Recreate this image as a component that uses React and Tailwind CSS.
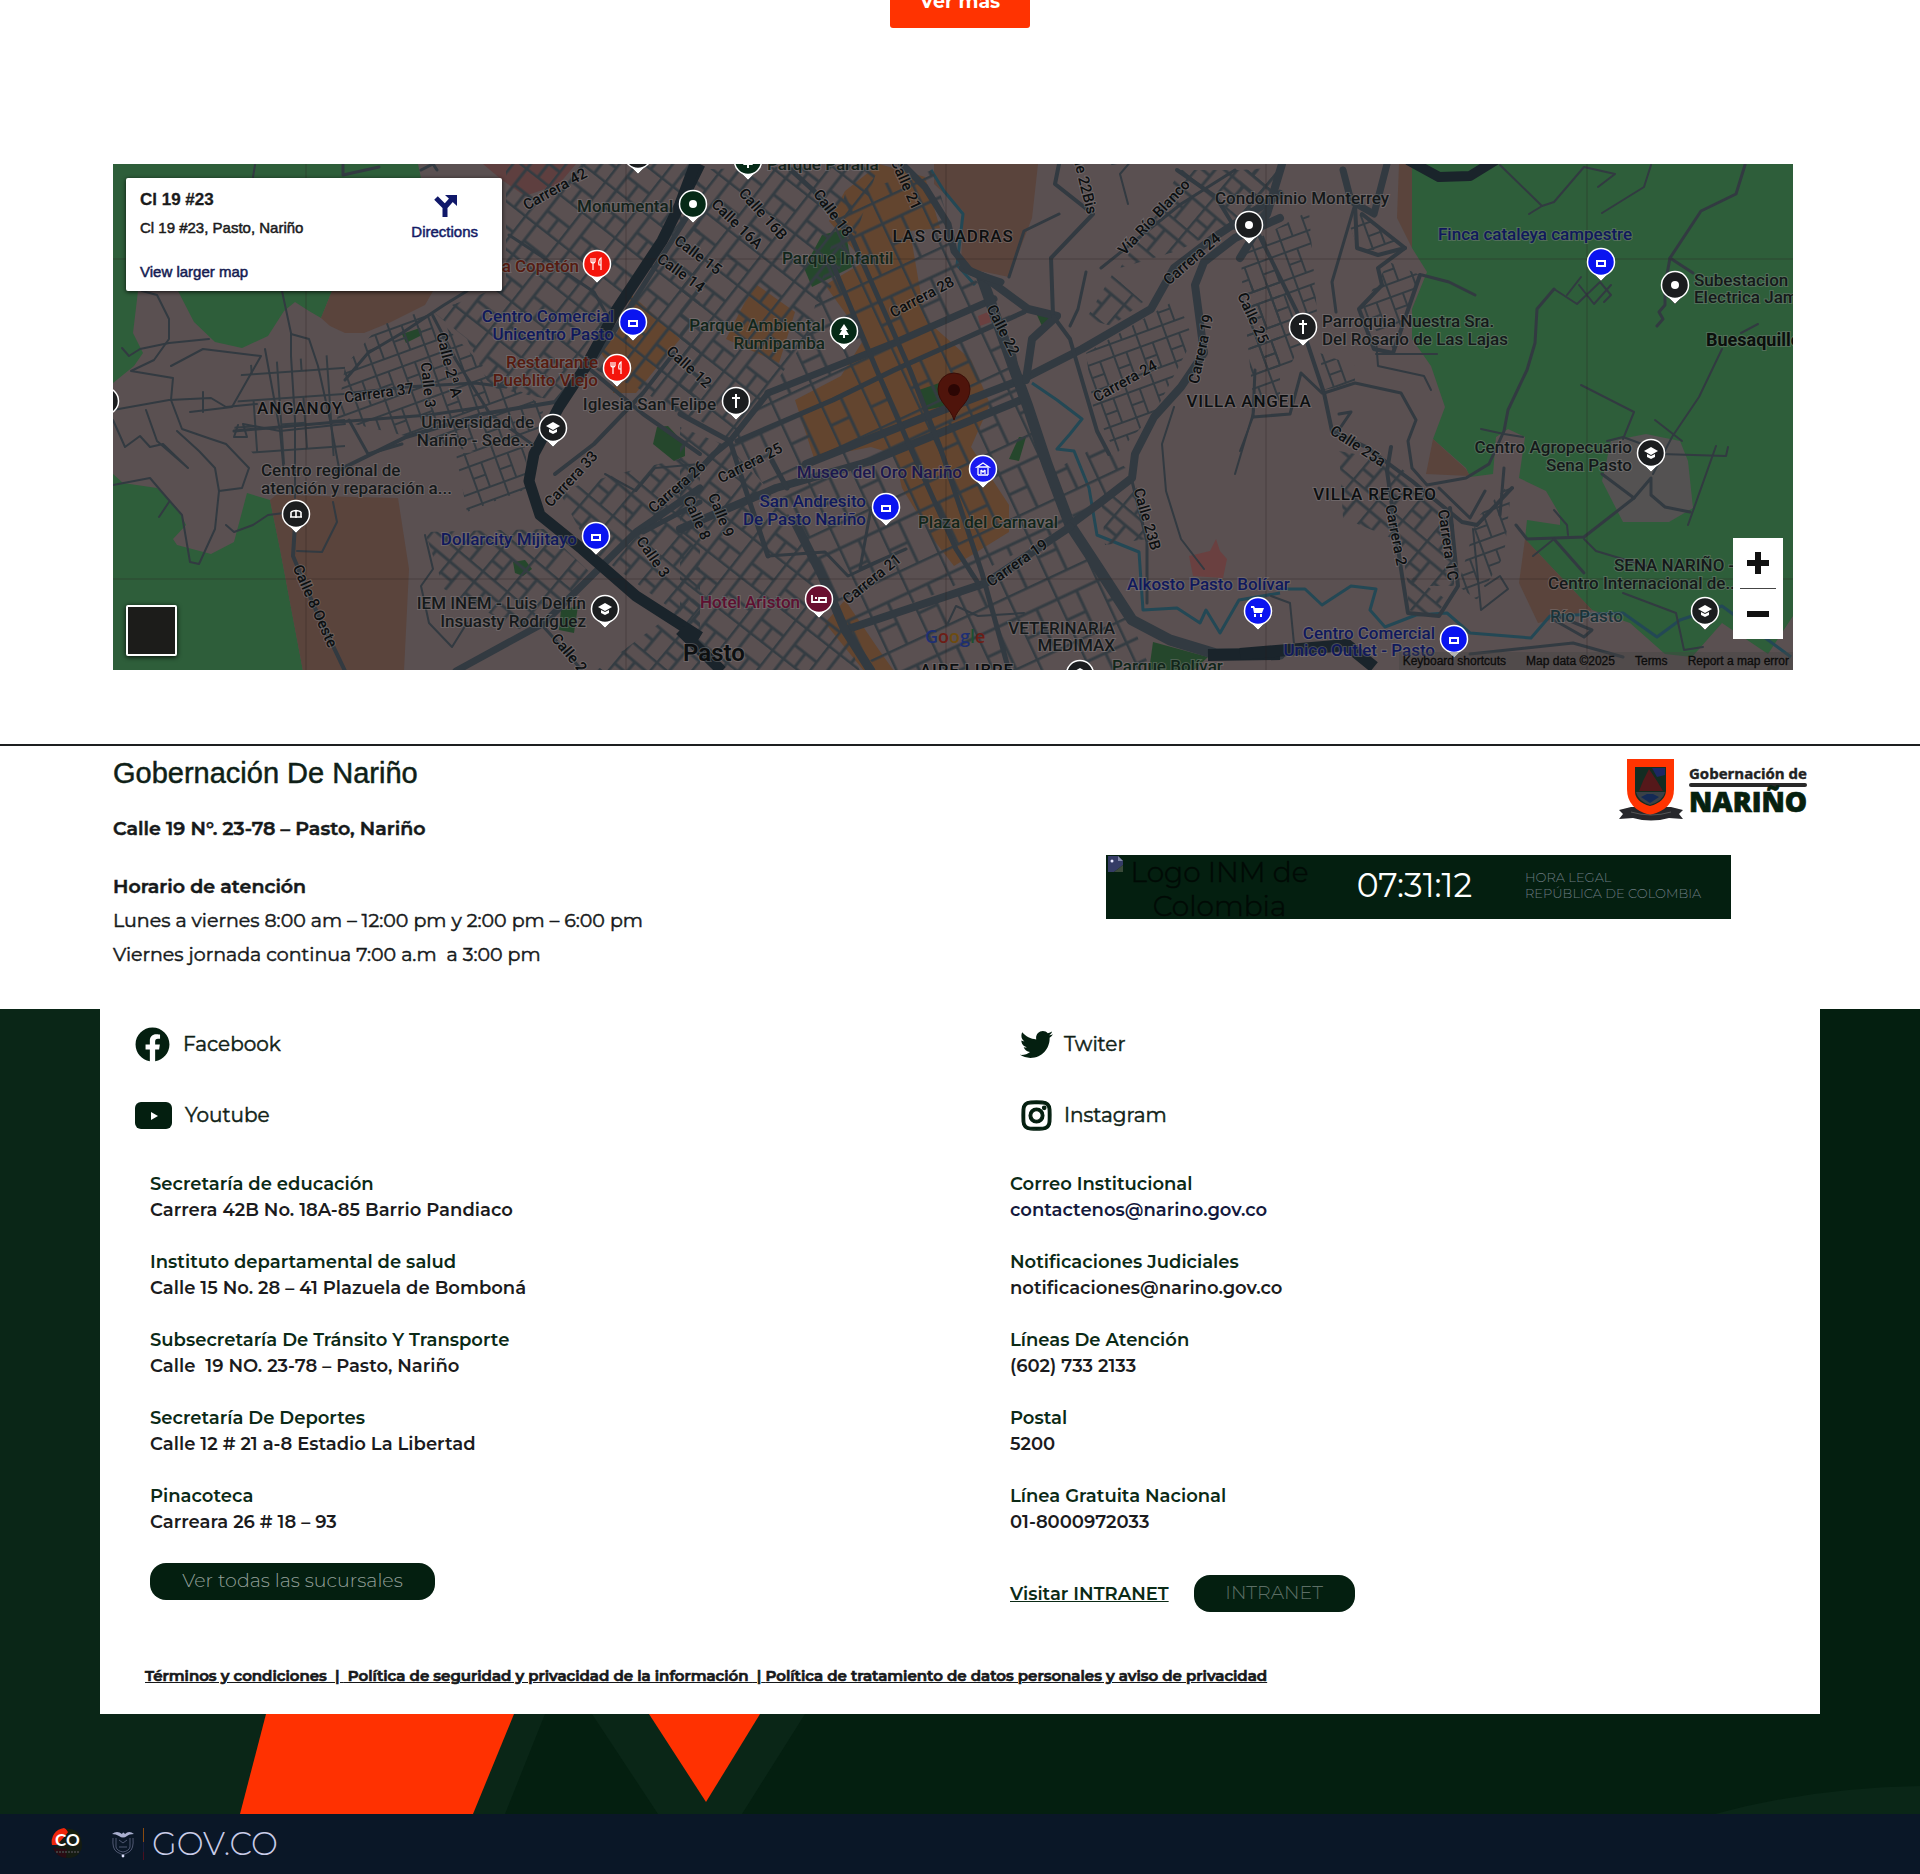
import React from "react";
import { FaFacebook, FaTwitter, FaInstagram } from "react-icons/fa";

/* ---------- map geometry ---------- */

const SHEETS = { west: 100, center: 680, east: 1240 };
const project = (sheet, pts) =>
  pts
    .split(" ")
    .map((p) => {
      const [x, y] = p.split(",").map(Number);
      return `${Math.round(SHEETS[sheet] + x * 0.38265)},${Math.round(150 + y * 0.338)}`;
    })
    .join(" ");

const GREEN = "#2e5e3a";
const BROWN = "#5a443c";
const PARK = "#25472c";
const SHOP = "#63452f";
const ROSE = "#6a4040";

const AREAS = [
  ["west", GREEN, "34,40 620,40 830,40 840,83 605,417 578,497 545,475 510,450 480,475 440,550 370,585 300,568 245,510 205,417 100,417 85,540 112,600 90,640 34,690"],
  ["west", BROWN, "605,417 870,417 850,460 760,510 690,540 640,540 600,520 578,497"],
  ["west", "#5e3f3f", "1000,40 1245,40 1200,100 1110,135 1050,90"],
  ["west", GREEN, "34,960 60,985 150,1000 200,1060 225,1110 190,1150 200,1170 290,1195 350,1160 385,1015 445,1035 470,1180 530,1540 34,1540"],
  ["west", BROWN, "445,1035 460,1020 780,1030 808,1240 795,1540 530,1540 470,1180"],
  ["west", PARK, "1455,820 1485,818 1530,870 1528,905 1500,920 1445,870"],
  ["west", PARK, "1080,1220 1110,1212 1130,1240 1105,1260 1085,1250"],
  ["west", PARK, "790,545 835,528 842,548 800,570"],
  ["west", SHOP, "1390,430 1515,560 1400,720 1340,720 1345,660 1310,600 1350,540"],
  ["west", PARK, "1205,1360 1250,1350 1240,1430 1200,1420"],
  ["center", BROWN, "665,40 935,40 920,200 860,375 735,345 740,180 665,100"],
  ["center", SHOP, "520,40 640,80 680,230 600,240 640,500 760,620 810,750 760,880 860,1050 860,1130 715,1230 660,1150 580,1000 560,900 500,880 350,910 300,740 420,670 480,560 380,400 480,330 390,210 430,120"],
  ["center", SHOP, "200,400 300,480 260,630 120,560 170,450"],
  ["center", SHOP, "430,1330 520,1480 560,1540 480,1540 380,1400"],
  ["center", PARK, "370,250 430,235 450,345 345,405 325,350"],
  ["center", PARK, "625,710 700,680 720,750 640,770"],
  ["center", PARK, "930,482 975,480 990,500 945,520"],
  ["center", PARK, "885,850 905,850 885,920 860,915"],
  ["center", PARK, "1235,1455 1380,1500 1340,1540 1225,1540"],
  ["center", ROSE, "1330,1200 1385,1185 1400,1150 1410,1185 1430,1210 1420,1265 1340,1260"],
  ["center", ROSE, "780,490 805,480 812,510 785,520"],
  ["east", GREEN, "450,40 450,290 490,360 450,470 450,560 500,640 535,760 505,855 590,940 600,968 660,960 670,850 700,825 745,850 730,970 800,1010 835,1080 835,1110 750,1095 745,1150 920,1360 1020,1400 1110,1490 1180,1500 1260,1400 1380,1490 1445,1380 1445,40"],
  ["east", BROWN, "415,40 450,40 450,290 410,200"],
  ["east", BROWN, "505,855 590,945 600,965 487,960"],
  ["east", BROWN, "745,1150 920,1360 780,1400 730,1280"],
  ["east", "#545252", "970,860 1060,840 1150,860 1170,920 1185,1060 1120,1100 1000,1100 945,980"],
];

const RIVERS = [
  ["center", "655,60 690,120 740,190 725,340 770,400"],
  ["center", "920,690 985,740 1050,795 1020,840 985,885 1030,890 1070,1000 1090,1140 1200,1190 1210,1360 1300,1355 1360,1400 1375,1360 1410,1430 1460,1330 1568,1310"],
  ["east", "100,1300 170,1300 215,1345 290,1290 355,1300 340,1360 380,1410 460,1375 540,1370 600,1430 760,1445 810,1380 1000,1370 1090,1440 1150,1390 1260,1350 1320,1400 1440,1500"],
];

// [sheet, fill pattern, outline]
const BLOCKS = [
  ["west", "grid-steep", "1060,40 1568,40 1568,820 1400,700 1270,640 1180,740 1020,700 960,560 870,480 1060,400"],
  ["west", "grid-mild", "640,640 730,520 860,470 1000,640 1160,760 1140,860 1000,900 620,800"],
  ["west", "grid-upright", "370,640 640,600 640,900 430,940 350,830"],
  ["west", "grid-mild", "930,900 1110,880 1120,1000 960,1070"],
  ["west", "grid-diag", "850,1130 1160,1120 1290,1260 1100,1420 900,1300"],
  ["west", "grid-diag", "1200,1010 1350,960 1568,900 1568,1420 1280,1180"],
  ["west", "grid-diag", "1300,1537 1568,1310 1568,1540"],
  ["center", "grid-steep", "0,60 520,40 460,250 330,560 230,720 130,860 0,760"],
  ["center", "grid-core", "430,130 660,60 740,350 860,480 900,740 960,930 1020,1110 700,1300 430,1420 370,1260 300,1100 130,870 230,720 330,560"],
  ["center", "grid-steep", "0,820 130,880 300,1100 370,1260 470,1540 130,1540 0,1400"],
  ["center", "grid-core", "440,1430 800,1290 1020,1130 1180,1400 1230,1540 520,1540"],
  ["center", "grid-core", "960,960 1100,870 1180,960 1030,1090"],
  ["center", "grid-mild", "1060,600 1300,440 1340,560 1240,780 1140,900 1080,760"],
  ["center", "grid-diag", "1060,500 1130,370 1210,450 1130,520"],
  ["center", "grid-diag", "1310,60 1568,60 1568,150 1300,300 1150,350"],
  ["center", "grid-mild", "1470,400 1568,390 1568,740 1500,760"],
  ["center", "grid-diag", "1100,1030 1190,980 1220,1150 1110,1170"],
  ["east", "grid-mild", "0,260 50,260 180,180 200,480 130,640 40,660 10,500"],
  ["east", "grid-mild", "280,200 320,190 430,290 310,300"],
  ["east", "grid-mild", "390,330 470,370 400,590 310,480"],
  ["east", "grid-mild", "210,600 300,640 300,690 220,710"],
  ["east", "grid-diag", "260,890 400,920 560,1080 560,1290 440,1290 420,1160 270,1090"],
  ["east", "grid-mild", "620,1090 710,980 690,1200 620,1330 570,1290"],
  ["east", "grid-diag", "440,1250 540,1330 510,1380 440,1360"],
  ["east", "grid-diag", "0,60 110,50 80,180 0,240"],
];

// [sheet, width, points]
const ROADS = [
  ["west", 2, "58,585 75,610 105,590 180,570 285,560"],
  ["west", 2, "110,417 150,430 180,500 180,560 140,620 80,655 190,675 185,740 215,825 290,855 330,870 390,940 370,1000 310,1010 300,940 260,890 200,830"],
  ["west", 2, "34,770 180,740 290,735 330,760 410,750"],
  ["west", 2, "34,800 65,880 105,845 130,880 165,870 230,940 150,860 120,770"],
  ["west", 2, "34,990 130,970 160,1010 215,1080 235,1220 260,1225 300,1120 310,1010"],
  ["west", 2, "180,1040 155,1085"],
  ["west", 2, "330,1110 350,1130 400,1110 440,1080 480,1075"],
  ["west", 2, "235,775 345,760 420,610 270,590 185,640"],
  ["west", 2, "475,417 500,540 500,610 510,800 510,1030"],
  ["west", 2, "430,590 470,830 480,960"],
  ["west", 2, "500,545 545,560 570,640 600,800 625,940"],
  ["west", 2, "610,1040 620,1100 580,1190 515,1185"],
  ["west", 2, "270,715 270,775"],
  ["west", 2, "360,815 350,850 385,850 375,810 470,830 640,810"],
  ["west", 3, "350,830 620,805 860,785 1000,760"],
  ["west", 3, "640,680 700,600 790,540 900,460 960,417"],
  ["west", 3, "660,720 800,700 980,690 1060,700"],
  ["west", 4, "510,1110 505,1200 560,1350 640,1540"],
  ["west", 4, "620,950 800,850 1000,780 1190,745 1230,690"],
  ["west", 3, "650,800 700,900 790,870"],
  ["west", 3, "870,490 930,620 1020,780 1140,880"],
  ["west", 3, "1070,250 1160,320 1290,420 1340,520"],
  ["west", 3, "880,60 870,40 840,60"],
  ["west", 2, "405,45 400,80"],
  ["west", 3, "635,45 635,75 730,50"],
  ["west", 2, "850,1140 870,1240 840,1290 860,1400 920,1470 960,1400"],
  ["west", 7, "930,1540 1160,1400 1400,1130 1568,1000"],
  ["west", 3, "1150,1400 1230,1500 1260,1540"],
  ["west", 5, "1190,780 1330,560 1568,140"],
  ["west", 4, "1270,640 1420,780 1568,900"],
  ["west", 5, "1420,1130 1568,1040"],
  ["west", 4, "1190,960 1290,870 1420,720 1500,600"],
  ["west", 2, "1320,960 1400,1010 1450,940 1568,930"],
  ["center", 7, "230,720 560,570 820,440"],
  ["center", 8, "330,930 620,800 890,680 1050,590 1230,470 1290,350 1400,255 1568,130"],
  ["center", 8, "0,1120 250,1000 500,920 890,740"],
  ["center", 11, "790,380 870,640 910,760 960,930 1020,1110 1090,1230 1180,1390 1280,1450 1400,1490 1568,1490"],
  ["center", 8, "740,350 800,380 910,470 985,490 920,560 905,680"],
  ["center", 7, "580,40 640,110 700,220 715,300 760,360 840,390"],
  ["center", 8, "1568,200 1450,260 1370,330 1345,400 1370,600 1310,700 1240,790 1190,900 1180,970 1100,1040 1020,1110"],
  ["center", 8, "1020,1115 800,1280 430,1420"],
  ["center", 9, "300,1100 370,1260 430,1420 500,1540"],
  ["center", 6, "230,720 130,860 90,900 0,1010"],
  ["center", 5, "0,780 130,860 170,1000 230,1200"],
  ["center", 5, "150,860 400,740 560,650 900,480"],
  ["center", 5, "290,60 350,120 450,260 600,650 680,880 790,1250 860,1540"],
  ["center", 5, "400,340 510,640 600,880 720,1180 780,1280"],
  ["center", 5, "280,1000 240,920"],
  ["center", 4, "990,40 980,100 1080,190 970,320 975,490"],
  ["center", 3, "860,375 900,240 990,190"],
  ["center", 4, "975,490 1020,560 1030,600 1090,830 1120,900"],
  ["center", 3, "1060,360 1040,470 1020,520"],
  ["center", 3, "1100,350 1310,160 1450,60"],
  ["center", 4, "1300,60 1400,140 1450,230"],
  ["center", 2, "1290,760 1260,870 1270,1010 1310,1150 1370,1240"],
  ["center", 2, "1500,770 1450,960"],
  ["center", 2, "1130,40 1180,30 1150,70 1170,160"],
  ["center", 2, "700,1400 720,1350 780,1380 900,1370"],
  ["center", 3, "1180,980 1220,1160 1220,1340"],
  ["center", 3, "230,1200 380,1190 440,1260 590,1180 470,1240 500,1060"],
  ["east", 8, "110,40 70,190 0,320"],
  ["east", 7, "270,60 290,150 350,190 385,40"],
  ["east", 4, "50,250 150,480 220,720 240,830"],
  ["east", 3, "300,160 240,390 250,480"],
  ["east", 4, "300,160 305,290 360,310 430,290 320,190"],
  ["east", 4, "430,290 360,350 370,400 310,470 350,590 400,600 470,370"],
  ["east", 3, "40,650 35,790 130,780 160,660 215,720"],
  ["east", 2, "35,790 0,890"],
  ["east", 3, "220,720 300,690 420,720 460,800 440,860 450,940 490,990 590,970 650,930 690,830 700,770 750,650 770,570 775,470 820,410"],
  ["east", 4, "240,830 330,880 450,980 580,1100 620,1110 710,1000"],
  ["east", 4, "395,880 385,950 420,1240 440,1370 520,1380 570,1290 550,1060"],
  ["east", 3, "260,780 290,775 250,840"],
  ["east", 2, "610,1120 630,1360 700,1300 680,1260 640,1290"],
  ["east", 3, "680,1080 690,940"],
  ["east", 2, "680,45 790,165 820,155 900,50 980,70 935,110"],
  ["east", 2, "790,165 755,190"],
  ["east", 2, "1075,45 1055,110 945,185"],
  ["east", 3, "1320,45 1295,130 1205,180 1125,320 1110,400 1110,460 1095,480 1105,500 1090,520"],
  ["east", 3, "1125,320 1185,365"],
  ["east", 2, "820,410 880,455 940,390 970,430 950,450"],
  ["east", 2, "890,375 855,430"],
  ["east", 2, "885,400 925,455 970,400"],
  ["east", 2, "1355,515 1310,540"],
  ["east", 2, "1260,590 1200,730 1130,850 1080,960"],
  ["east", 2, "890,695 1030,775 1000,855"],
  ["east", 2, "630,825 690,840 740,850"],
  ["east", 2, "1085,800 1155,860"],
  ["east", 2, "1100,900 1270,905 1275,880"],
  ["east", 2, "1245,875 1170,1110"],
  ["east", 2, "960,860 1000,850 1050,870"],
  ["east", 3, "945,960 1030,1030 1075,970 1075,1020 1110,1055 1175,1070"],
  ["east", 3, "1030,1030 900,1145 750,1150 720,1110"],
  ["east", 2, "900,1150 930,1185 1060,1230"],
  ["east", 3, "820,1150 900,1250"],
  ["east", 2, "820,1065 855,1110 858,1140"],
  ["east", 2, "820,1150 765,1200"],
  ["east", 3, "475,370 545,390 615,430"],
  ["east", 2, "355,605 515,605"],
  ["east", 2, "355,560 360,640 480,670 500,710"],
  ["east", 3, "520,1000 600,1090 640,1010"],
  ["east", 2, "80,1320 130,1340 145,1490"],
  ["east", 2, "1000,1310 1140,1370 1160,1480 1210,1470"],
  ["east", 3, "830,1380 920,1420 900,1440 820,1390"],
  ["east", 3, "600,1490 870,1460 1000,1500"],
];

const HIGHWAYS = [
  ["west", 11, "1568,40 1470,270 1350,470 1270,640 1200,760 1135,900 1120,980 1150,1080 1260,1180 1400,1320 1568,1440"],
  ["center", 11, "40,40 0,160"],
  ["center", 11, "0,1420 110,1540"],
  ["center", 12, "1380,1495 1568,1490"],
  ["east", 12, "0,1490 280,1465 350,1530"],
  ["east", 10, "440,30 520,80 600,78 670,30"],
];

// [text, x, y, anchor, colour]
const INK = "#15191a";
const BLUE = "#10195c";
const RUST = "#561b10";
const PLACES = [
  ["Monumental", 673, 212, "end", "#14221a"],
  ["La Copetón", 579, 272, "end", RUST],
  ["Centro Comercial", 614, 322, "end", BLUE],
  ["Unicentro Pasto", 614, 340, "end", BLUE],
  ["Restaurante", 598, 368, "end", RUST],
  ["Pueblito Viejo", 598, 386, "end", RUST],
  ["Universidad de", 534, 428, "end", INK],
  ["Nariño - Sede...", 534, 446, "end", INK],
  ["Centro regional de", 261, 476, "start", INK],
  ["atención y reparación a...", 261, 494, "start", INK],
  ["Dollarcity Mijitayo", 577, 545, "end", BLUE],
  ["IEM INEM - Luis Delfín", 586, 609, "end", INK],
  ["Insuasty Rodríguez", 586, 627, "end", INK],
  ["Iglesia San Felipe", 716, 410, "end", INK],
  ["Parque Paraña", 767, 170, "start", "#14221a"],
  ["Parque Infantil", 782, 264, "start", "#12261a"],
  ["Parque Ambiental", 825, 331, "end", "#12261a"],
  ["Rumipamba", 825, 349, "end", "#12261a"],
  ["Museo del Oro Nariño", 962, 478, "end", "#1c184e"],
  ["San Andresito", 866, 507, "end", BLUE],
  ["De Pasto Nariño", 866, 525, "end", BLUE],
  ["Plaza del Carnaval", 918, 528, "start", "#12261a"],
  ["Hotel Ariston", 800, 608, "end", "#5e1030"],
  ["VETERINARIA", 1115, 634, "end", INK],
  ["MEDIMAX", 1115, 651, "end", INK],
  ["Parque Bolívar", 1112, 672, "start", "#12261a"],
  ["Alkosto Pasto Bolívar", 1127, 590, "start", BLUE],
  ["Condominio Monterrey", 1215, 204, "start", INK],
  ["Finca cataleya campestre", 1438, 240, "start", BLUE],
  ["Subestacion", 1694, 286, "start", INK],
  ["Electrica Jamondino", 1694, 303, "start", INK],
  ["Parroquia Nuestra Sra.", 1322, 327, "start", INK],
  ["Del Rosario de Las Lajas", 1322, 345, "start", INK],
  ["Centro Agropecuario", 1632, 453, "end", INK],
  ["Sena Pasto", 1632, 471, "end", INK],
  ["SENA NARIÑO -", 1614, 571, "start", INK],
  ["Centro Internacional de...", 1548, 589, "start", INK],
  ["Río Pasto", 1550, 622, "start", "#1b3338"],
  ["Centro Comercial", 1435, 639, "end", BLUE],
  ["Unico Outlet - Pasto", 1435, 656, "end", BLUE],
];

const DISTRICTS = [
  ["ANGANOY", 300, 414],
  ["LAS CUADRAS", 953, 242],
  ["VILLA ANGELA", 1249, 407],
  ["VILLA RECREO", 1375, 500],
  ["AIRE LIBRE", 967, 676],
];

// [text, cx, cy, angle]
const STREETS = [
  ["Carrera 42", 555, 189, -29],
  ["Carrera 37", 379, 393, -8],
  ["Calle 2ª A", 449, 365, 76],
  ["Calle 3", 428, 385, 84],
  ["Calle 8 Oeste", 315, 606, 66],
  ["Carrera 33", 571, 479, -47],
  ["Calle 3", 653, 557, 55],
  ["Calle 2", 569, 653, 50],
  ["Calle 16A", 737, 224, 44],
  ["Calle 16B", 763, 214, 48],
  ["Calle 15", 698, 255, 37],
  ["Calle 14", 681, 273, 36],
  ["Calle 12", 689, 367, 42],
  ["Calle 18", 833, 213, 53],
  ["Calle 21", 906, 184, 66],
  ["Calle 22Bis", 1083, 177, 76],
  ["Vía Río Blanco", 1154, 217, -47],
  ["Carrera 24", 1192, 259, -41],
  ["Carrera 28", 922, 297, -28],
  ["Calle 22", 1003, 330, 63],
  ["Carrera 24", 1125, 381, -29],
  ["Carrera 19", 1201, 349, -78],
  ["Calle 25", 1253, 318, 65],
  ["Carrera 26", 677, 487, -41],
  ["Carrera 25", 750, 463, -27],
  ["Calle 8", 697, 518, 66],
  ["Calle 9", 721, 515, 68],
  ["Carrera 21", 872, 579, -39],
  ["Carrera 19", 1017, 563, -35],
  ["Calle 23B", 1147, 519, 74],
  ["Calle 25a", 1358, 446, 33],
  ["Carrera 2", 1396, 535, 79],
  ["Carrera 1C", 1448, 545, 82],
];

const BLACK = "#1b1d1f";
const PINS = [
  [693, 204, "#062a17", "dot"],
  [597, 264, "#f4150c", "food"],
  [633, 322, "#0a14f0", "bag"],
  [617, 368, "#f4150c", "food"],
  [553, 428, BLACK, "school"],
  [296, 514, BLACK, "civic"],
  [596, 536, "#0a14f0", "bag"],
  [605, 609, BLACK, "school"],
  [105, 401, BLACK, "none"],
  [638, 155, BLACK, "none"],
  [748, 161, "#062a17", "tree"],
  [844, 331, "#062a17", "tree"],
  [736, 401, BLACK, "cross"],
  [983, 469, "#1a1af0", "museum"],
  [886, 507, "#0a14f0", "bag"],
  [819, 599, "#6a1030", "bed"],
  [1249, 225, BLACK, "dot"],
  [1258, 611, "#0a14f0", "cart"],
  [1080, 674, BLACK, "school"],
  [1601, 262, "#0a14f0", "bag"],
  [1675, 285, BLACK, "dot"],
  [1303, 327, BLACK, "cross"],
  [1651, 453, BLACK, "school"],
  [1705, 611, BLACK, "school"],
  [1454, 639, "#0a14f0", "bag"],
];

const GLYPHS = {
  none: null,
  dot: <circle r="4" fill="#fff" />,
  cross: <path d="M0-7V7M-4-3H4" stroke="#fff" strokeWidth="2" fill="none" />,
  tree: <path d="M0-7 4-1H2L5 4H1V7H-1V4H-5L-2-1H-4Z" fill="#fff" />,
  food: <path d="M-4-6V-2M-2-6V-2M-6-6V-2Q-4 0-2-2M-4-1V6M4 6V-6Q1-4 2 1H4" stroke="#fff" strokeWidth="1.2" fill="none" />,
  bag: <path d="M-4-1H4V4H-4Z" stroke="#fff" strokeWidth="2" fill="none" />,
  school: (
    <g fill="#fff">
      <path d="M0-6 7-2 0 2-7-2Z" />
      <path d="M-4 1 0 3 4 1V4L0 6-4 4Z" />
    </g>
  ),
  civic: <path d="M-5-2V3M5-2V3M0-3V4M-6 3H6M-5-2Q0-5 5-2" stroke="#fff" strokeWidth="1.6" fill="none" />,
  museum: <path d="M-6-2 0-6 6-2ZM-5-1V6M5-1V6M-5 6H5M-2 1V5M2 1V5M-2 1 0 3 2 1" stroke="#fff" strokeWidth="1.3" fill="none" />,
  bed: <path d="M-7-4V4M-7 3H7V0M7 4V-1H0V3M-4-1H-2" stroke="#fff" strokeWidth="1.8" fill="none" />,
  cart: (
    <g fill="#fff">
      <path d="M-7-5H-4L-3-3H6L4 2H-4L-5-3H-7Z" />
      <path d="M-4 3H-2V6H-4ZM2 3H4V6H2Z" />
    </g>
  ),
};

// Blocks of a street grid: long parallel streets with through cross streets and a few half-block lanes.
function GridPattern({ id, angle, w, h, stroke = 2 }) {
  const mid = Math.round(w / 2);
  return (
    <pattern id={id} width={w} height={h * 3} patternUnits="userSpaceOnUse" patternTransform={`rotate(${angle})`}>
      <path
        d={`M0 1H${w}M0 ${h + 1}H${w}M0 ${h * 2 + 1}H${mid}M1 0V${h * 3}M${mid} ${h}V${h * 3}`}
        stroke="#343c42"
        strokeWidth={stroke}
        fill="none"
      />
    </pattern>
  );
}

function CityMap() {
  return (
    <svg
      className="block h-full w-full"
      viewBox="113 164 1680 506"
      preserveAspectRatio="xMidYMid slice"
      role="img"
      aria-label="Mapa de Pasto, Nariño"
      fontFamily="Roboto, sans-serif"
    >
      <defs>
        <GridPattern id="grid-steep" angle={-52} w={38} h={14} stroke={3} />
        <GridPattern id="grid-mild" angle={-20} w={28} h={13} />
        <GridPattern id="grid-upright" angle={-4} w={50} h={26} />
        <GridPattern id="grid-diag" angle={40} w={32} h={14} stroke={3} />
        <GridPattern id="grid-core" angle={-25} w={44} h={23} stroke={3} />
      </defs>
      <rect x="113" y="164" width="1680" height="506" fill="#5a5051" />
      {AREAS.map(([s, fill, p], i) => (
        <polygon key={i} fill={fill} points={project(s, p)} />
      ))}
      {RIVERS.map(([s, p], i) => (
        <polyline key={i} fill="none" stroke="#234855" strokeWidth="3" strokeLinejoin="round" points={project(s, p)} />
      ))}
      {BLOCKS.map(([s, id, p], i) => (
        <polygon key={i} fill={`url(#${id})`} points={project(s, p)} />
      ))}
      <g fill="none" stroke="#323a41" strokeLinejoin="round" strokeLinecap="round">
        {ROADS.map(([s, w, p], i) => (
          <polyline key={i} strokeWidth={w} points={project(s, p)} />
        ))}
      </g>
      <g fill="none" stroke="#1a242b" strokeLinejoin="round">
        {HIGHWAYS.map(([s, w, p], i) => (
          <polyline key={i} strokeWidth={w} points={project(s, p)} />
        ))}
      </g>
      <path d="M306 164V670M626 164V670M946 164V670M1266 164V670M1587 164V670M113 259H1793M113 579H1793" stroke="#2a2020" strokeOpacity=".35" />

      <g stroke="#8d8a8c" strokeOpacity=".4" strokeWidth="2" paintOrder="stroke">
        <g fontSize="15" fontWeight="500" fill="#0c0f10" textAnchor="middle">
          {STREETS.map(([t, x, y, a], i) => (
            <text key={i} transform={`translate(${x} ${y}) rotate(${a})`} y="5">
              {t}
            </text>
          ))}
        </g>
        <g fontSize="17" fontWeight="500" fill="#0c0f10" textAnchor="middle">
          {DISTRICTS.map(([t, x, y]) => (
            <text key={t} x={x} y={y} className="tracking-wider">
              {t}
            </text>
          ))}
        </g>
        <g fontSize="17" fontWeight="500">
          {PLACES.map(([t, x, y, anchor, fill], i) => (
            <text key={i} x={x} y={y} textAnchor={anchor} fill={fill}>
              {t}
            </text>
          ))}
        </g>
        <text x="683" y="661" fontSize="24" fontWeight="600" fill="#0d0f10">
          Pasto
        </text>
        <text x="1706" y="346" fontSize="18" fontWeight="700" fill="#0b0f0c">
          Buesaquillo
        </text>
      </g>

      {PINS.map(([x, y, fill, glyph], i) => (
        <g key={i} transform={`translate(${x} ${y})`}>
          <path d="M-10 9 0 19 10 9Z" fill="#fff" stroke="#222" strokeWidth=".5" />
          <circle r="13.5" fill={fill} stroke="#fff" strokeWidth="1.5" />
          {GLYPHS[glyph]}
        </g>
      ))}
      <path d="M954 420C951 408 938 403 938 389A16 16 0 0 1 970 389C970 403 957 408 954 420Z" fill="#4f140b" stroke="#3a0d07" />
      <circle cx="954" cy="390" r="6" fill="#2b0604" />
      <text x="925" y="643" fontSize="18" fontWeight="600" fontFamily="'Open Sans', sans-serif">
        <tspan fill="#1e2f73">G</tspan>
        <tspan fill="#6d1d16">o</tspan>
        <tspan fill="#6e4c10">o</tspan>
        <tspan fill="#1e2f73">g</tspan>
        <tspan fill="#1d5130">l</tspan>
        <tspan fill="#6d1d16">e</tspan>
      </text>
    </svg>
  );
}

function MapSection() {
  return (
    <section className="relative h-[506px] overflow-hidden">
      <CityMap />
      <div className="absolute left-[13px] top-[14px] flex h-[113px] w-[376px] justify-between rounded-xs bg-white py-3 pl-3.5 pr-6 font-['Liberation_Sans',Arial,sans-serif] shadow-[0_1px_4px_rgba(0,0,0,0.8)]">
        <div className="flex flex-col text-[#1b1b1b]">
          <strong className="text-[17px] leading-5 font-bold [-webkit-text-stroke:0.3px]">Cl 19 #23</strong>
          <span className="mt-2.5 text-[15px] leading-4 [-webkit-text-stroke:0.5px]">Cl 19 #23, Pasto, Nariño</span>
          <a href="#mapa" className="mt-7 text-[15px] leading-4 text-[#141b52] [-webkit-text-stroke:0.5px]">
            View larger map
          </a>
        </div>
        <a href="#ruta" className="flex flex-col items-center text-[15px] leading-4 text-[#141b66] [-webkit-text-stroke:0.5px]">
          <svg viewBox="0 0 24 24" className="mb-1.5 mt-1 size-6" aria-hidden="true">
            <path d="M3 4 12 13V23M12 13 19 5" stroke="#10186a" strokeWidth="5" fill="none" />
            <path d="M12 1H24V12Z" fill="#10186a" />
          </svg>
          Directions
        </a>
      </div>
      <button aria-label="Satellite view" className="absolute bottom-[14px] left-[13px] size-[51px] rounded-xs border-2 border-white bg-[#1c1c1a] shadow-[0_1px_5px_rgba(0,0,0,0.9)]" />
      <div className="absolute bottom-[31px] right-[10px] flex w-[50px] flex-col items-center bg-white">
        <button aria-label="Zoom in" className="flex h-[50px] w-full items-center justify-center">
          <svg viewBox="0 0 22 22" className="size-[22px]" aria-hidden="true">
            <path d="M11 0V22M0 11H22" stroke="#111" strokeWidth="6" />
          </svg>
        </button>
        <div className="h-px w-9 bg-[#444]" />
        <button aria-label="Zoom out" className="flex h-[50px] w-full items-center justify-center">
          <svg viewBox="0 0 22 22" className="size-[22px]" aria-hidden="true">
            <path d="M0 11H22" stroke="#111" strokeWidth="6" />
          </svg>
        </button>
      </div>
      <div className="absolute bottom-0 right-0 flex gap-5 bg-[#444]/40 px-1 font-['Liberation_Sans',Arial,sans-serif] text-xs leading-[18px] text-[#0c0c0c] [-webkit-text-stroke:0.3px]">
        <a href="#atajos">Keyboard shortcuts</a>
        <span>Map data ©2025</span>
        <a href="#terminos-mapa">Terms</a>
        <a href="#error">Report a map error</a>
      </div>
    </section>
  );
}

/* ---------- footer ---------- */

function DepartmentLogo() {
  return (
    <div className="flex w-[186px] gap-1.5">
      <svg viewBox="0 0 64 62" className="h-[62px] w-16 shrink-0" aria-hidden="true">
        <path d="M0 51 12 48H52L64 51 60 55 64 60 50 59Q32 64 14 59L0 60 4 55Z" fill="#26272b" />
        <path d="M8 0H55V30Q55 50 31 56Q8 50 8 30Z" fill="#ff3401" />
        <path d="M16 8H47V32Q46 43 31 47Q16 43 16 32Z" fill="#132c22" />
        <path d="M33 9H46V16L38 18Z" fill="#1c2864" />
        <path d="M30 10 38 22 44 32H20L24 22Z" fill="#55181a" />
        <path d="M17 33H46Q44 42 31 46Q19 42 17 33Z" fill="#3a4147" />
        <path d="M22 38 31 44 40 38 34 35H28Z" fill="#142a55" />
        <path d="M12 53Q32 59 52 53" stroke="#555" strokeWidth="1" fill="none" />
      </svg>
      <div className="flex flex-col pt-1">
        <span className="text-[15px] leading-5 font-bold whitespace-nowrap text-[#222] font-['Open_Sans',sans-serif] [-webkit-text-stroke:0.4px]">Gobernación de</span>
        <span className="h-1 w-full rounded bg-[#2a2a2a]" />
        <span className="text-[28px] leading-7 font-extrabold text-[#06210f] font-['Open_Sans',sans-serif] [-webkit-text-stroke:0.7px]">NARIÑO</span>
      </div>
    </div>
  );
}

function LegalTime() {
  return (
    <div className="mr-[74px] mt-[34px] flex h-16 w-[625px] overflow-hidden bg-[#041f10] font-light">
      <div className="flex w-[209px] text-center text-[28px] leading-[34px] text-[#010a05]">
        <svg viewBox="0 0 18 18" className="size-[18px] shrink-0" aria-hidden="true">
          <path d="M2 1H12L17 6V10L12 14 8 17H2Z" fill="#353c66" />
          <path d="M12 1V6H17Z" fill="#8288a8" />
          <path d="M17 10 8 17H17Z" fill="#3a4a3a" />
          <circle cx="6" cy="6" r="1.5" fill="#e8e8ff" />
        </svg>
        <span className="[-webkit-text-stroke:0.5px]">Logo INM de Colombia</span>
      </div>
      <time className="w-[199px] pt-3 text-center text-[33px] leading-9 font-normal text-white">07:31:12</time>
      <div className="flex-1 pt-3.5 pl-[11px] text-[13px] leading-4 whitespace-nowrap text-[#6b7a80]">
        HORA LEGAL
        <br />
        REPÚBLICA DE COLOMBIA
      </div>
    </div>
  );
}

function YoutubeMark() {
  return (
    <svg viewBox="0 0 37 27" className="h-[27px] w-[37px]" aria-hidden="true">
      <rect x="0" y="0" width="37" height="27" rx="6" fill="#041f10" />
      <path d="M16 10 23 14 16 18Z" fill="#fff" />
    </svg>
  );
}

function Social({ icon, label, gap }) {
  return (
    <a href={`#${label.toLowerCase()}`} className={`flex h-9 items-center ${gap} text-xl text-[#111f17] [-webkit-text-stroke:0.5px]`}>
      {icon}
      {label}
    </a>
  );
}

const OFFICES = [
  ["Secretaría de educación", "Carrera 42B No. 18A-85 Barrio Pandiaco"],
  ["Instituto departamental de salud", "Calle 15 No. 28 – 41 Plazuela de Bomboná"],
  ["Subsecretaría De Tránsito Y Transporte", "Calle  19 NO. 23-78 – Pasto, Nariño"],
  ["Secretaría De Deportes", "Calle 12 # 21 a-8 Estadio La Libertad"],
  ["Pinacoteca", "Carreara 26 # 18 – 93"],
];

const CONTACTS = [
  ["Correo Institucional", "contactenos@narino.gov.co", true],
  ["Notificaciones Judiciales", "notificaciones@narino.gov.co"],
  ["Líneas De Atención", "(602) 733 2133"],
  ["Postal", "5200"],
  ["Línea Gratuita Nacional", "01-8000972033"],
];

function InfoList({ items }) {
  return (
    <dl className="flex flex-col gap-[26px] text-lg leading-[26px] font-semibold">
      {items.map(([title, value, link]) => (
        <div key={title}>
          <dt className="text-[#0b2a16]">{title}</dt>
          <dd className="whitespace-pre text-[#1b1b1d]">
            {link ? (
              <a href={`mailto:${value}`} className="text-[#14193c]">
                {value}
              </a>
            ) : (
              value
            )}
          </dd>
        </div>
      ))}
    </dl>
  );
}

function GovBar() {
  return (
    <div className="flex h-[60px] items-center bg-[#0a1727] pl-[51px]">
      <svg viewBox="0 0 32 34" className="h-[34px] w-8" role="img" aria-label="CO Colombia">
        <circle cx="18" cy="18" r="13" fill="#151c12" />
        <path d="M15 31A14 14 0 0 1 2 21L16 22Z" fill="#2a0c14" />
        <path d="M1 18A14 14 0 0 1 13 1L18 4 14 9 6 18Z" fill="#f0260a" />
        <path d="M15 2A13 13 0 0 1 30 12L20 10Z" fill="#17210f" />
        <text x="4" y="19" fontSize="17" fontWeight="700" fill="#fff" fontFamily="Lato, sans-serif">
          CO
        </text>
        <path d="M5 25H28" stroke="#3c3c3c" strokeWidth="2" strokeDasharray="2 1" />
      </svg>
      <svg viewBox="0 0 24 28" className="ml-7 h-7 w-6" aria-hidden="true" fill="none" stroke="#7d82a4">
        <path d="M1 4Q6 0 11 4Q12 1 14 4Q18 0 23 4Q18 4 16 6Q12 9 8 6Q5 4 1 4Z" fill="#aab0d0" stroke="none" />
        <path d="M2 8Q1 19 6 22L12 25 18 22Q23 19 22 8M5 8V17Q6 21 12 22Q18 21 19 17V8M8 10 12 13 16 10M8 17H16" strokeOpacity=".6" />
        <circle cx="12" cy="26" r="1.4" fill="#dfe2ff" stroke="none" />
      </svg>
      <div className="ml-2 flex h-8 w-px flex-col">
        <span className="h-3.5 bg-[#8a4a10]" />
        <span className="h-2.5 bg-[#1b1f3c]" />
        <span className="h-2 bg-[#4a1020]" />
      </div>
      <span className="ml-2 text-[32px] leading-9 font-light text-[#c9cce8]">GOV.CO</span>
    </div>
  );
}

export default function App() {
  return (
    <div className="overflow-x-hidden bg-white font-['Montserrat',Inter,sans-serif]">
      <div className="flex h-7 flex-col items-center justify-end overflow-hidden">
        <button className="h-[52px] w-[140px] shrink-0 rounded-[3px] bg-[#ff3301] text-[19px] font-bold text-white">Ver más</button>
      </div>

      <main className="mt-[136px] pl-[113px] pr-[127px]">
        <MapSection />
      </main>

      <footer className="mt-[74px] border-t-2 border-[#1d1f20]">
        <div className="flex h-[263px] justify-between pl-[113px] pr-[115px]">
          <div className="text-[19px] leading-[34px] text-[#16191a] [-webkit-text-stroke:0.5px]">
            <h2 className="pt-[10px] text-[29px] text-[#0f1f17] font-['Liberation_Sans',Arial,sans-serif]">Gobernación De Nariño</h2>
            <p className="mt-[22px] font-semibold">Calle 19 N°. 23-78 – Pasto, Nariño</p>
            <p className="mt-6 font-semibold">Horario de atención</p>
            <p>Lunes a viernes 8:00 am – 12:00 pm y 2:00 pm – 6:00 pm</p>
            <p className="whitespace-pre">Viernes jornada continua 7:00 a.m  a 3:00 pm</p>
          </div>
          <div className="flex flex-col items-end pt-[13px]">
            <DepartmentLogo />
            <LegalTime />
          </div>
        </div>

        <div className="flex bg-[#041f10]">
          <div className="w-[100px] shrink-0 bg-[#0a2617]" />
          <div className="h-[705px] flex-1 bg-white pt-[17px]">
            <div className="grid grid-cols-2">
              <div className="flex flex-col gap-[35px] pl-[35px]">
                <Social gap="gap-[13px]" label="Facebook" icon={<FaFacebook className="size-[35px] text-[#041f10]" />} />
                <Social gap="gap-[13px]" label="Youtube" icon={<YoutubeMark />} />
              </div>
              <div className="flex flex-col gap-[35px] pl-[60px]">
                <Social gap="gap-[11px]" label="Twiter" icon={<FaTwitter className="size-[33px] text-[#041f10]" />} />
                <Social gap="gap-[11px]" label="Instagram" icon={<FaInstagram className="size-[33px] stroke-[#041f10] stroke-[20px] text-[#041f10]" />} />
              </div>
            </div>
            <div className="mt-[38px] grid grid-cols-2">
              <div className="pl-[50px]">
                <InfoList items={OFFICES} />
                <button className="mt-[28px] h-[37px] w-[285px] rounded-2xl bg-[#041f10] text-[19px] font-light text-[#93a09a]">
                  Ver todas las sucursales
                </button>
              </div>
              <div className="pl-[50px]">
                <InfoList items={CONTACTS} />
                <div className="mt-[40px] flex items-center gap-[25px]">
                  <a href="#intranet" className="text-lg font-semibold text-[#0b2a16] underline">
                    Visitar INTRANET
                  </a>
                  <button className="h-[37px] w-[161px] rounded-2xl bg-[#041f10] text-[19px] font-light text-[#5d6f66]">INTRANET</button>
                </div>
              </div>
            </div>
            <p className="mt-[52px] pl-[45px] text-[15px] leading-6 font-semibold whitespace-pre text-[#17181a] underline [-webkit-text-stroke:0.7px]">
              <a href="#terminos">Términos y condiciones </a> | <a href="#seguridad"> Política de seguridad y privacidad de la información </a> |{" "}
              <a href="#datos">Política de tratamiento de datos personales y aviso de privacidad</a>
            </p>
          </div>
          <div className="w-[100px] shrink-0" />
        </div>

        <svg viewBox="0 0 1920 100" preserveAspectRatio="none" className="block h-[100px] w-full bg-[#041f10]" aria-hidden="true">
          <path d="M0 0H545L505 100H0Z" fill="#0a2617" />
          <path d="M592 0H805L742 100H658Z" fill="#0a2617" />
          <path d="M266 0H514L473 100H240Z" fill="#ff3101" />
          <path d="M649 0H760L706 88Z" fill="#ff3101" />
          <path d="M1715 100Q1810 74 1920 72V100Z" fill="#0a2617" />
        </svg>
        <GovBar />
      </footer>
    </div>
  );
}
